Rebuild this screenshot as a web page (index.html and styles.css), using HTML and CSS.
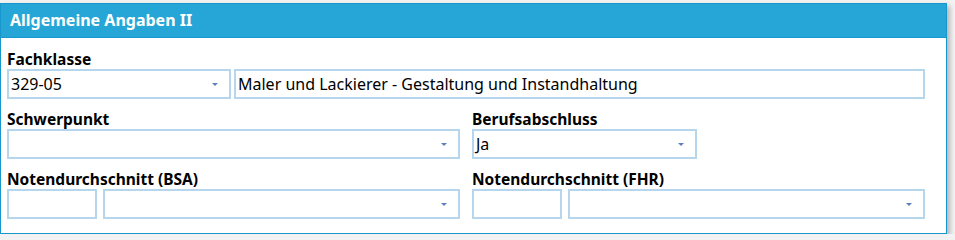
FILE: index.html
```html
<!DOCTYPE html>
<html lang="de">
<head>
  <meta charset="UTF-8">
  <title>Allgemeine Angaben II</title>
  <link rel="stylesheet" href="styles.css">
</head>
<body>
  <div class="panel">
    <div class="panel-head">Allgemeine Angaben II</div>
    <div class="panel-body">
      <!-- Fachklasse: Schlüssel + Bezeichnung -->
      <div class="field">
        <div class="label">Fachklasse</div>
        <div class="row">
          <div class="box combo w-key">329-05<span class="arrow"></span></div>
          <div class="box grow">Maler und Lackierer - Gestaltung und Instandhaltung</div>
        </div>
      </div>

      <div class="cols">
        <div class="field">
          <div class="label">Schwerpunkt</div>
          <div class="row">
            <div class="box combo grow"><span class="arrow"></span></div>
          </div>
        </div>
        <div class="field">
          <div class="label">Berufsabschluss</div>
          <div class="row">
            <div class="box combo w-yes">Ja<span class="arrow"></span></div>
          </div>
        </div>
      </div>

      <div class="cols">
        <div class="field">
          <div class="label">Notendurchschnitt (BSA)</div>
          <div class="row gap6">
            <div class="box w-note"></div>
            <div class="box combo grow"><span class="arrow"></span></div>
          </div>
        </div>
        <div class="field">
          <div class="label">Notendurchschnitt (FHR)</div>
          <div class="row gap6">
            <div class="box w-note"></div>
            <div class="box combo grow"><span class="arrow"></span></div>
          </div>
        </div>
      </div>
    </div>
  </div>
</body>
</html>
```

FILE: styles.css
```css
/* Formular-Panel im Stil der Schulverwaltung */
body {
  margin: 0;
  padding-top: 3px;
  background-color: #f2f2f2;
  font-family: 'Noto Sans', 'Open Sans', sans-serif;
}
.panel {
  width: 947px;
  box-sizing: border-box;
  background: white;
  border: 1px solid #1797cb;
  box-shadow: 3px 3px 5px rgba(0, 0, 0, 0.25);
}
.panel-head {
  height: 33px;
  line-height: 33px;
  padding-left: 9px;
  background-color: #25a6d6;
  border-bottom: 1px solid #1797cb;
  color: white;
  font-size: 16px;
  font-weight: bold;
}
.panel-body {
  padding: 11px 21px 14px 6px;
}
.field {
  margin-bottom: 10px;
}
.panel-body > .cols:last-child .field {
  margin-bottom: 0;
}
.label {
  height: 20px;
  line-height: 20px;
  font-size: 15.5px;
  font-weight: bold;
  color: #000;
}
.cols {
  display: grid;
  grid-template-columns: 1fr 1fr;
  gap: 12px;
}
.row {
  display: flex;
  gap: 3px;
}
.row.gap6 {
  gap: 6px;
}
.box {
  position: relative;
  height: 30px;
  box-sizing: border-box;
  border: 2px solid #b6d6ee;
  padding-left: 2px;
  line-height: 26px;
  font-size: 16px;
  color: #000;
}
.grow {
  flex: 1;
}
.w-key {
  width: 224px;
}
.w-yes {
  width: 225px;
}
.w-note {
  width: 90px;
}
/* kleiner Pfeil der Auswahlliste */
.arrow {
  position: absolute;
  right: 11px;
  top: 12px;
  width: 0;
  height: 0;
  border-left: 3px solid transparent;
  border-right: 3px solid transparent;
  border-top: 3px solid #5b7fbf;
}
```
